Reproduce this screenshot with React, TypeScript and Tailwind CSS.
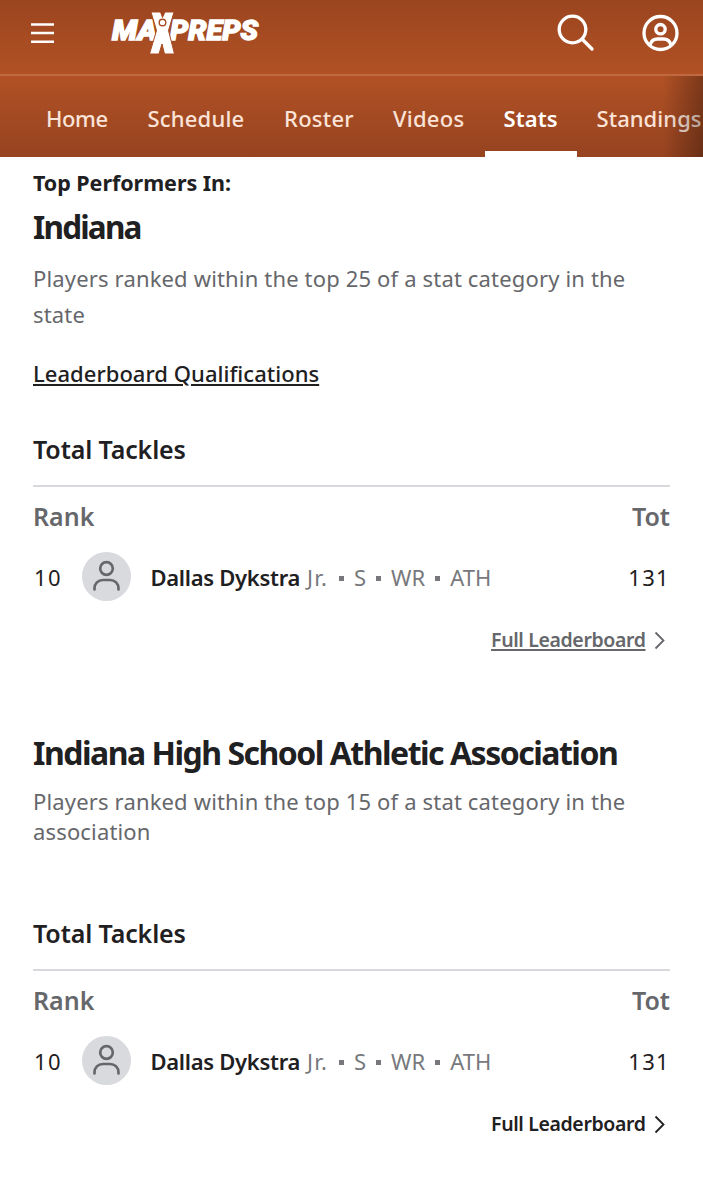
import clsx from "clsx";

const tabs = [
  { label: "Home", className: "w-[101.5px] tracking-[-0.4px]" },
  { label: "Schedule", className: "w-[136.5px] tracking-[0.2px]" },
  { label: "Roster", className: "w-[109px] tracking-[0.25px]" },
  { label: "Videos", className: "w-[110.5px] tracking-[0.25px]" },
  { label: "Stats", className: "w-[92.5px] tracking-[0.1px]", active: true },
  { label: "Standings", className: "ml-[0.5px] tracking-[0.050px]" },
];

const positions = ["S", "WR", "ATH"];

function MenuIcon() {
  return (
    <svg width="24" height="22" viewBox="0 0 24 22" stroke="#fff" strokeWidth="2.600">
      <path d="M0 2.500h23M0 11h23M0 19.700h23" />
    </svg>
  );
}

function Logo() {
  return (
    <svg width="152" height="46" viewBox="0 0 152 46" className="ml-[54px]" fill="#fff">
      <g fontFamily="Roboto, sans-serif" fontWeight="900" fontStyle="italic" fontSize="27" stroke="#fff" strokeWidth="1.300">
        <text x="3" y="30.300" textLength="45" lengthAdjust="spacingAndGlyphs">MA</text>
        <text x="61" y="30.300" textLength="88" lengthAdjust="spacingAndGlyphs">PREPS</text>
      </g>
      <path
        d="M42 2h9.500l2 5.500L56 2h9l-5.500 18.500L65.500 44H55.500L53 34l-3 10h-9.500l7-23.500z"
        stroke="#a84b21"
        strokeWidth="1"
      />
      <circle cx="53.500" cy="12.500" r="3.300" stroke="#a84b21" strokeWidth="1.400" />
    </svg>
  );
}

function SearchIcon() {
  return (
    <svg width="40" height="40" viewBox="0 0 40 40" fill="none" stroke="#fff" strokeWidth="3.300" strokeLinecap="round">
      <circle cx="16.500" cy="16.500" r="13.300" />
      <path d="m26.500 26.500 9.500 9.500" />
    </svg>
  );
}

function AccountIcon() {
  return (
    <svg width="38" height="38" viewBox="0 0 38 38" fill="none" stroke="#fff" strokeWidth="3.300">
      <circle cx="19.500" cy="19" r="16.500" />
      <circle cx="19.500" cy="15.200" r="4.700" />
      <path d="M9 31c1.200-4.300 4.300-6 7.500-6h6c3.200 0 6.300 1.700 7.500 6" />
    </svg>
  );
}

function Avatar() {
  return (
    <div className="ml-5 size-[49px] rounded-full bg-[#d9dade]">
      <svg viewBox="0 0 49 49" fill="none" stroke="#66676b" strokeWidth="2.700" strokeLinecap="round">
        <circle cx="24.500" cy="16.500" r="6.300" />
        <path d="M12.500 37.500v-1c0-5 3.500-8.500 8.500-8.500h7c5 0 8.500 3.500 8.500 8.500v1" />
      </svg>
    </div>
  );
}

function Leaderboard({ muted = false }: { muted?: boolean }) {
  return (
    <div>
      <h3 className="text-[25px] leading-9 font-semibold tracking-[-0.12px]">Total Tackles</h3>
      <div className="mt-[18px] h-0.5 bg-[#d8d9dc]" />
      <div className="mt-[11px] flex justify-between text-[25px] leading-9 font-semibold text-[#66676b]">
        <span>Rank</span>
        <span>Tot</span>
      </div>
      <div className="mt-[18px] flex h-[49px] items-center text-[22px] leading-[30px]">
        <span className="w-[29px] pt-px pl-px tracking-[1.5px]">10</span>
        <Avatar />
        <p className="ml-[19.5px] pt-px">
          <span className="font-semibold tracking-[-0.3px]">Dallas Dykstra</span>
          <span className="ml-[7px] inline-flex items-center text-[#77787c]">
            <span className="w-[22px] tracking-[1.2px]">Jr.</span>
            {positions.map((position) => (
              <span key={position} className="inline-flex items-center">
                <i className="mx-[10px] mt-[3px] size-[5px] bg-[#77787c]" />
                {position}
              </span>
            ))}
          </span>
        </p>
        <span className="ml-auto pt-px tracking-[1.3px]">131</span>
      </div>
      <a
        className={clsx(
          "mt-[25px] flex h-7 items-center justify-end pr-[5.5px] text-[19.5px] leading-7 font-semibold tracking-[-0.38px]",
          muted && "text-[#66676b]"
        )}
      >
        <span className={clsx(muted && "underline decoration-2 underline-offset-[2px]")}>Full Leaderboard</span>
        <svg width="11" height="19" viewBox="0 0 11 19" className="ml-2" fill="none" stroke="currentColor" strokeWidth="1.800">
          <path d="m1.500 1.500 8 8-8 8" />
        </svg>
      </a>
    </div>
  );
}

export default function App() {
  return (
    <div className="h-[1200px] w-[703px] overflow-hidden bg-white font-['Noto_Sans',sans-serif] text-[#1f2022]">
      <header className="flex h-[74px] items-center bg-linear-to-b from-[#9b451f] to-[#b15125] pb-2 pl-[31px]">
        <MenuIcon />
        <Logo />
        <div className="mr-6 ml-auto flex items-center gap-[45px]">
          <SearchIcon />
          <AccountIcon />
        </div>
      </header>
      <div className="h-0.5 bg-[#c0683f]" />
      <nav className="relative flex h-[81px] bg-linear-to-b from-[#b15125] to-[#964320] pl-[27px] text-[22px] leading-[84px] font-medium whitespace-nowrap text-[#fbe3d8]">
        {tabs.map((tab) => (
          <div
            key={tab.label}
            className={clsx(
              "h-full shrink-0 pl-[19px]",
              tab.className,
              tab.active && "border-b-[6px] border-white font-semibold text-white"
            )}
          >
            {tab.label}
          </div>
        ))}
        <div className="absolute inset-y-0 right-0 w-10 bg-linear-to-r from-transparent to-black/30" />
      </nav>

      <main className="px-[33px] pt-3">
        <h4 className="text-[21.5px] leading-7 font-bold tracking-[-0.05px]">Top Performers In:</h4>
        <h2 className="mt-[10px] text-[31.5px] leading-10 font-bold tracking-[-1.8px]">Indiana</h2>
        <p className="mt-[13px] text-[22px] leading-9 tracking-[0.16px] text-[#66676b]">
          Players ranked within the top 25 of a stat category in the
          <br />
          state
        </p>
        <a className="mt-[26px] block text-[22px] leading-[30px] font-medium tracking-[0.03px] underline decoration-2 underline-offset-[2px]">
          Leaderboard Qualifications
        </a>
        <div className="mt-[43px]">
          <Leaderboard muted />
        </div>
        <h2 className="mt-[79px] text-[32px] leading-10 font-bold tracking-[-1.5px] whitespace-nowrap">
          Indiana High School Athletic Association
        </h2>
        <p className="mt-[13px] text-[22px] leading-[30px] tracking-[0.16px] text-[#66676b]">
          Players ranked within the top 15 of a stat category in the
          <br />
          association
        </p>
        <div className="mt-[69px]">
          <Leaderboard />
        </div>
      </main>
    </div>
  );
}
